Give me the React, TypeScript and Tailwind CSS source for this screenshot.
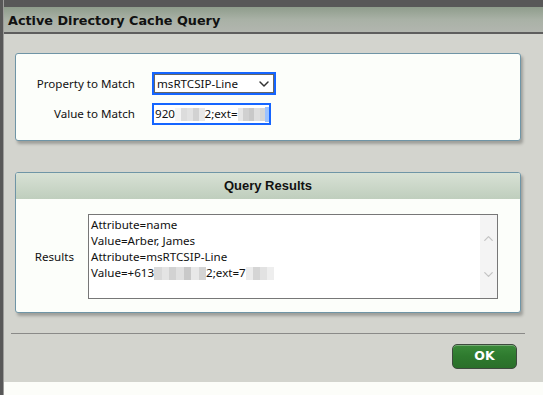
import { ChevronDown, ChevronUp } from "lucide-react";

function Blur({ w, shades }: { w: number; shades: string[] }) {
  // pixelated redaction, drawn as a row of grey cells
  return (
    <span className="inline-flex h-[13px] align-middle" style={{ width: w }}>
      {shades.map((s, i) => (
        <span key={i} className="h-full flex-1" style={{ backgroundColor: s }} />
      ))}
    </span>
  );
}

export default function App() {
  return (
    <div className="flex h-[395px] w-[543px] overflow-hidden font-['Noto_Sans',sans-serif] text-[11.6px] text-[#111]">
      <div className="w-[3px] bg-[#585858]" />
      <div className="w-px bg-[#9c9c9a]" />
      <div className="flex flex-1 flex-col">
        <div className="h-[7px] bg-[#585858]" />
        <div className="flex h-[27px] items-center border-b-2 border-[#5e5e5e] bg-gradient-to-b from-[#8f9d8c] via-[#a9b1a6] to-[#b2b6af] pl-[4px] pt-[3px]">
          <span className="font-['DejaVu_Sans',sans-serif] text-[12.8px] font-bold text-[#111]">
            Active Directory Cache Query
          </span>
        </div>

        <div className="flex h-[348px] flex-col bg-[#d3d4ce]">
          <div className="ml-[11px] mt-[19px] h-[88px] w-[506px] rounded-[3px] border border-[#6f95a6] bg-[#fcfefa] shadow-[2px_3px_3px_rgba(0,0,0,0.25)]">
            <div className="mt-[18px] grid grid-cols-[119px_auto] items-center gap-x-[17px] gap-y-[8px]">
              <div className="text-right">Property to Match</div>
              <div className="flex h-[23px] w-[124px] items-center justify-between border-2 border-[#1565ff] bg-white pl-[3px] pr-[2px] shadow-[inset_0_0_0_1px_#666]">
                <span>msRTCSIP-Line</span>
                <ChevronDown size={16} strokeWidth={2.2} className="text-[#333]" />
              </div>
              <div className="text-right">Value to Match</div>
              <div className="flex h-[22px] w-[119px] items-center overflow-hidden border-2 border-[#1565ff] bg-white pl-[1px]">
                <span className="whitespace-nowrap">920</span>
                <Blur w={32} shades={["#f4f4f4", "#dcdcdc", "#e2e2e2", "#d2d2d2", "#e8e8e8"]} />
                <span className="whitespace-nowrap">2;ext=</span>
                <Blur w={30} shades={["#e6e6e6", "#d0d0d0", "#c8c8c8", "#dedede", "#d6d6d6"]} />
                <span className="h-[15px] w-[4px] bg-[#9cc2ff]" />
              </div>
            </div>
          </div>

          <div className="ml-[11px] mt-[31px] h-[141px] w-[506px] overflow-hidden rounded-[3px] border border-[#6f95a6] bg-[#fcfefa] shadow-[2px_3px_3px_rgba(0,0,0,0.25)]">
            <div className="flex h-[26px] items-center justify-center bg-gradient-to-b from-[#d8e1d5] to-[#bfcebd] font-['Liberation_Sans',sans-serif] text-[13px] font-bold text-[#111]">
              Query Results
            </div>
            <div className="mt-[15px] flex items-center">
              <div className="w-[58px] text-right">Results</div>
              <div className="ml-[14px] flex h-[85px] w-[410px] border border-[#777] bg-white">
                <div className="flex-1 pl-[2px] pt-[2px] leading-[16px]">
                  <div>Attribute=name</div>
                  <div>Value=Arber, James</div>
                  <div>Attribute=msRTCSIP-Line</div>
                  <div className="flex items-center">
                    <span>Value=+613</span>
                    <Blur w={52} shades={["#d9d9d9", "#e4e4e4", "#d2d2d2", "#e0e0e0", "#c9c9c9", "#e8e8e8", "#d4d4d4"]} />
                    <span>2;ext=7</span>
                    <Blur w={28} shades={["#ececec", "#d5d5d5", "#e2e2e2", "#eeeeee"]} />
                  </div>
                </div>
                <div className="flex w-[17px] flex-col items-center justify-between bg-[#f4f4f4] py-[16px] text-[#c4c4c4]">
                  <ChevronUp size={15} strokeWidth={2} />
                  <ChevronDown size={15} strokeWidth={2} />
                </div>
              </div>
            </div>
          </div>

          <div className="ml-[7px] mt-[20px] h-px w-[514px] bg-[#8a8a88]" />

          <div className="mr-[26px] mt-[10px] flex justify-end">
            <button className="flex h-[25px] w-[65px] items-center justify-center rounded-[5px] border border-[#3e4a3e] bg-gradient-to-b from-[#3a8a3a] via-[#2e7a2e] to-[#2a6f2a] font-['DejaVu_Sans',sans-serif] text-[12.5px] font-bold text-white shadow-[inset_0_1px_0_rgba(255,255,255,0.3)]">
              OK
            </button>
          </div>
        </div>

        <div className="flex-1 bg-[#fcfdf9]" />
      </div>
    </div>
  );
}
